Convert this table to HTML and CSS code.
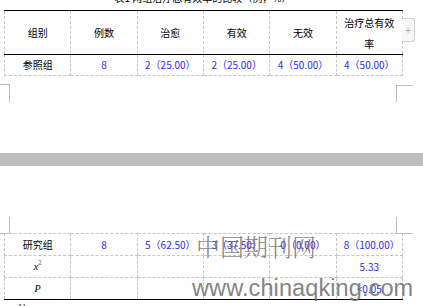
FILE: index.html
```html
<!DOCTYPE html>
<html lang="zh">
<head>
<meta charset="utf-8">
<title>表1</title>
<link rel="stylesheet" href="styles.css">
</head>
<body>
<div class="page page-top">
  <div class="title">表1 两组治疗总有效率的比较（例，%）</div>
  <table class="grid">
    <colgroup><col><col><col><col><col><col></colgroup>
    <thead>
      <tr class="head">
        <th>组别</th><th>例数</th><th>治愈</th><th>有效</th><th>无效</th><th>治疗总有效率</th>
      </tr>
    </thead>
    <tbody>
      <tr class="row">
        <td class="name">参照组</td><td>8</td><td>2（25.00）</td><td>2（25.00）</td><td>4（50.00）</td><td>4（50.00）</td>
      </tr>
    </tbody>
  </table>
  <span class="addbtn">+</span>
  <span class="mark mark-tl"></span>
  <span class="mark mark-tr"></span>
</div>
<div class="band"></div>
<div class="page page-bottom">
  <span class="mark mark-bl"></span>
  <span class="mark mark-br"></span>
  <table class="grid grid-bottom">
    <colgroup><col><col><col><col><col><col></colgroup>
    <tbody>
      <tr class="row">
        <td class="name">研究组</td><td>8</td><td>5（62.50）</td><td>3（37.50）</td><td>0（0.00）</td><td>8（100.00）</td>
      </tr>
      <tr class="row">
        <td class="name"><i>x</i><sup>2</sup></td><td></td><td></td><td></td><td></td><td>5.33</td>
      </tr>
      <tr class="row last">
        <td class="name"><i>P</i></td><td></td><td></td><td></td><td></td><td>&lt;0.05</td>
      </tr>
    </tbody>
  </table>
  <div class="note">注：</div>
  <div class="wm-cn">中国期刊网</div>
  <div class="wm-url">www.chinaqking.com</div>
</div>
</body>
</html>
```
FILE: styles.css
```css
html, body {
  margin: 0;
  padding: 0;
  background: #fff;
}
body {
  width: 423px;
  height: 306px;
  overflow: hidden;
  font-family: "Noto Sans CJK SC", "Noto Sans", sans-serif;
  color: #000;
}
.page {
  position: relative;
  display: flow-root;
}
.page-top {
  height: 153px;
}
.title {
  width: 398px;
  margin: -9px 0 5px 4px;
  font-size: 10px;
  line-height: 14px;
  text-align: center;
  white-space: nowrap;
}
.grid {
  margin-left: 4px;
  width: 398px;
  border-collapse: collapse;
  table-layout: fixed;
}
.grid col {
  width: 66.33px;
}
.grid th,
.grid td {
  border: 1px dashed #c6c6c6;
  padding: 0 7px;
  text-align: center;
  font-size: 10px;
  font-weight: normal;
  color: #2a2aff;
}
.grid th,
.grid td.name {
  color: #000;
}
.head th {
  height: 43px;
  line-height: 21px;
  border-top: 1px solid #000;
  border-bottom: 1px solid #000;
}
.row td {
  height: 20px;
  line-height: 14px;
  padding-top: 0;
  padding-bottom: 0;
}
.grid-bottom {
  margin-top: 67px;
}
.grid-bottom .row td {
  height: 21px;
}
.grid-bottom .row.last td {
  border-bottom: 1px solid #000;
}
.name i {
  font-family: "Liberation Serif", serif;
  font-size: 10px;
}
.name sup {
  font-size: 6px;
  vertical-align: 5px;
  line-height: 0;
  color: #666;
}
.addbtn {
  position: absolute;
  left: 402px;
  top: 18px;
  width: 13px;
  height: 24px;
  box-sizing: border-box;
  border: 1px solid #cfcfcf;
  border-left: none;
  border-radius: 0 3px 3px 0;
  background: #f7f7f7;
  color: #aaa;
  font-family: "DejaVu Sans", sans-serif;
  font-size: 9px;
  line-height: 22px;
  text-align: center;
}
.mark {
  position: absolute;
  box-sizing: border-box;
  border: 0 solid #bdbdbd;
}
.mark-tl {
  left: 0;
  top: 84px;
  width: 10px;
  height: 18px;
  border-top-width: 1px;
  border-right-width: 1px;
}
.mark-tr {
  left: 396px;
  top: 85px;
  width: 17px;
  height: 17px;
  border-top-width: 1px;
  border-left-width: 1px;
}
.band {
  height: 13px;
  background: #bebebe;
}
.page-bottom {
  height: 140px;
}
.mark-bl {
  left: 0;
  top: 51px;
  width: 10px;
  height: 17px;
  border-right-width: 1px;
  border-bottom-width: 1px;
}
.mark-br {
  left: 396px;
  top: 51px;
  width: 17px;
  height: 17px;
  border-left-width: 1px;
  border-bottom-width: 1px;
}
.note {
  margin: 3px 0 0 18px;
  font-size: 10px;
  line-height: 12px;
}
.wm-cn {
  position: absolute;
  left: 196px;
  top: 67px;
  font-family: "Noto Serif CJK SC", "Noto Sans CJK SC", serif;
  font-weight: 300;
  font-size: 24px;
  line-height: 26px;
  color: rgba(100, 100, 100, 0.8);
  white-space: nowrap;
}
.wm-url {
  position: absolute;
  left: 192px;
  top: 109px;
  font-family: "Liberation Sans", Arial, sans-serif;
  font-size: 23.5px;
  line-height: 27px;
  letter-spacing: 0.1px;
  color: rgba(115, 115, 115, 0.9);
  white-space: nowrap;
}
```
